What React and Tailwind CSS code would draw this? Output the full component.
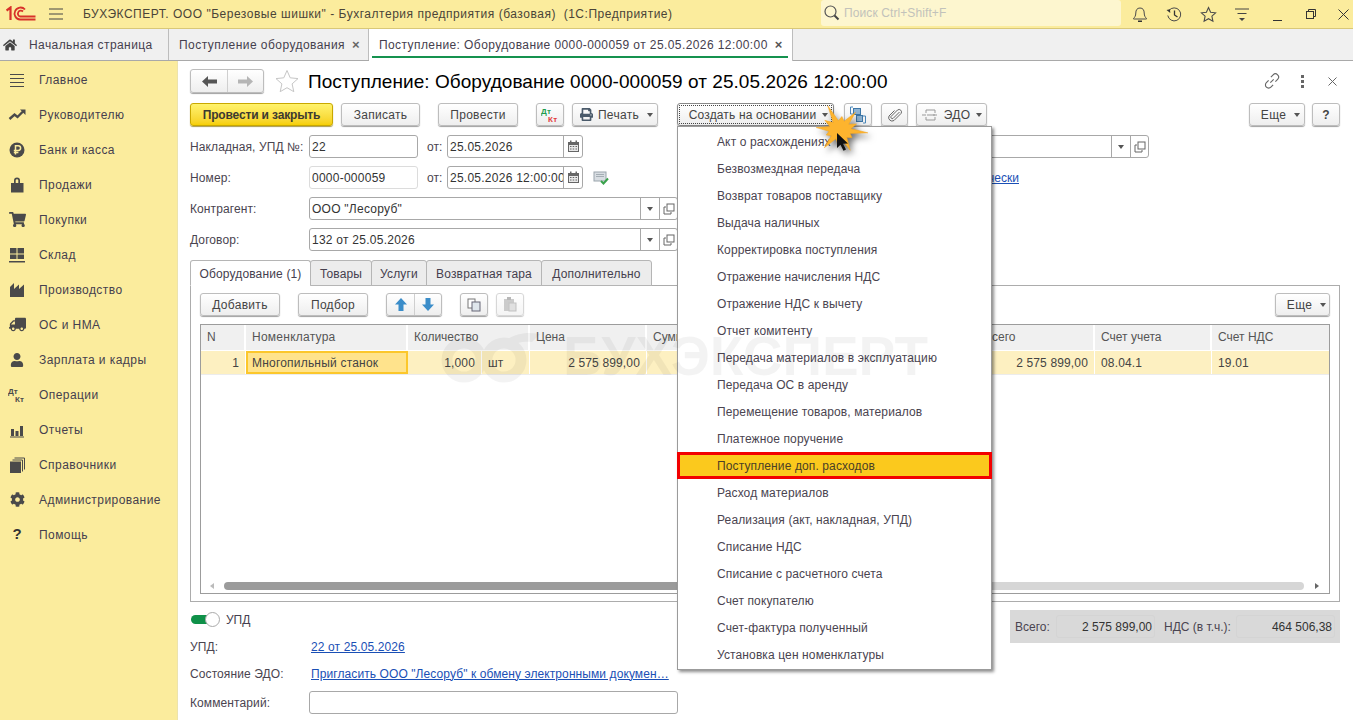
import React from "react";
import { FaHome, FaShoppingCart, FaTruck, FaUser, FaCog, FaPrint } from "react-icons/fa";

const I = ({ children, w = 20, h = 20, vb = "0 0 20 20", cls = "" }) => (
  <svg width={w} height={h} viewBox={vb} className={cls} fill="none">{children}</svg>
);
const D = "#4a4a4a";

const Caret = ({ c = "#555" }) => <span className="inline-block w-0 h-0 border-l-[3px] border-r-[3px] border-t-[4px] border-l-transparent border-r-transparent" style={{ borderTopColor: c }} />;

const Btn = ({ w, ml = "", children, cls = "", primary = false }) => (
  <div className={`${w} ${ml} h-[23px] shrink-0 flex items-center justify-center rounded-[3px] border text-[12px] ${primary ? "border-[#c9a800] bg-linear-to-b from-[#fff36b] to-[#f6cf00] font-bold tracking-[-0.15px] text-[#3c3a30] shadow-[0_1px_1px_#a89a50]" : "border-[#bdbdbd] bg-linear-to-b from-white to-[#eeeeee] tracking-[0.3px] text-[#444] shadow-[0_1px_1px_#a0a0a0]"} ${cls}`}>{children}</div>
);

const DtKt = ({ s = 1, a = "#1f9d4d", b = "#e33b3b" }) => (
  <svg width={18 * s} height={16 * s} viewBox="0 0 18 16">
    <text x="0" y="7" fontSize="8" fontWeight="700" fontFamily="Liberation Sans" fill={a}>Дт</text>
    <text x="7" y="15" fontSize="8" fontWeight="700" fontFamily="Liberation Sans" fill={b}>Кт</text>
  </svg>
);

const menuIcons = {
  main: <I><path d="M3 4.500h14M3 8.500h14M3 12.500h14M3 16.500h14" stroke={D} strokeWidth="1" /></I>,
  trend: <I><path d="M2.500 14l5-4.500 3 2.500 6-6" stroke={D} strokeWidth="2.400" /><path d="M13 4.500h5.500V10z" fill={D} /></I>,
  rub: <I><circle cx="10" cy="10" r="7.500" fill={D} /><path d="M8.500 14.500V5.700h2.700a2.300 2.300 0 010 4.800H6.800M6.800 12.600h4.600" stroke="#fbec9d" strokeWidth="1.500" /></I>,
  bag: <I><path d="M4 8h3V5.500a3 3 0 016 0V8h3.500v9.500H4z" fill={D} /><path d="M8.700 8V5.500a1.300 1.300 0 012.600 0V8z" fill="#fbec9d" /></I>,
  cart: <FaShoppingCart size={17} color={D} />,
  store: <I><path d="M3 3h6.500v5.500H3zM10.500 3H17v5.500h-6.500zM3 9.500h6.500V14H3zM10.500 9.500H17V14h-6.500z" fill={D} /><path d="M2 16h16v1.500H2z" fill={D} /></I>,
  prod: <I><path d="M3 17V7l4-4v6l5-4.500V9l5-4.500V17z" fill={D} /></I>,
  truck: <FaTruck size={17} color={D} style={{ transform: "scaleX(-1)" }} />,
  user: <FaUser size={14} color={D} />,
  dk: <DtKt a={D} b={D} />,
  bars: <I><path d="M4 9h3v7H4zM8.500 11h3v5h-3zM13 6h3v10h-3zM3 16.500h14v1H3z" fill={D} /></I>,
  books: <I><path d="M3 6.500h11V18H3z" fill={D} /><path d="M5.500 5h10v11.500M7.500 3h10v11.500" stroke={D} strokeWidth="1" /></I>,
  gear: <FaCog size={15} color={D} />,
  help: <span className="text-[15px] font-bold text-[#333]">?</span>,
};
const side = [["main", "Главное"], ["trend", "Руководителю"], ["rub", "Банк и касса"], ["bag", "Продажи"], ["cart", "Покупки"], ["store", "Склад"], ["prod", "Производство"], ["truck", "ОС и НМА"], ["user", "Зарплата и кадры"], ["dk", "Операции"], ["bars", "Отчеты"], ["books", "Справочники"], ["gear", "Администрирование"], ["help", "Помощь"]];

const Cal = () => (
  <svg width="13" height="13" viewBox="0 0 13 13"><path d="M1 2h11v10H1z" fill="#666" /><path d="M2 5h9v6H2z" fill="#e8e8e8" /><path d="M3 .5h1.500V3H3zM8.500.5H10V3H8.500z" fill="#666" /><path d="M3 6h1.500v1H3zM5.700 6h1.500v1H5.700zM8.500 6H10v1H8.500zM3 8.500h1.500v1H3zM5.700 8.500h1.500v1H5.700zM8.500 8.500H10v1H8.500z" fill="#666" /></svg>
);
const CopyI = () => (
  <svg width="12" height="12" viewBox="0 0 12 12" fill="none"><rect x="4" y="1" width="7" height="7" stroke="#666" /><path d="M3 4H1v7h7V9" stroke="#666" /></svg>
);
const Label = ({ w = "w-[119px]", children }) => <div className={`${w} shrink-0 text-[12px] tracking-[0.1px] text-[#4a4450]`}>{children}</div>;

const Field = ({ w, ml = "", children, light = false, cal = false, combo = false }) => (
  <div className={`${w} ${ml} h-[23px] shrink-0 flex items-center rounded-[3px] border bg-white text-[12px] tracking-[0.25px] text-[#333] ${light ? "border-[#dcdcdc]" : "border-[#a8a8a8]"}`}>
    <div className="flex-1 min-w-0 pl-[2px] overflow-hidden whitespace-nowrap">{children}</div>
    {cal && <div className="w-[19px] h-full flex items-center justify-center border-l border-[#a8a8a8]"><Cal /></div>}
    {combo && <div className="w-[19px] h-full flex items-center justify-center border-l border-[#a8a8a8]"><Caret /></div>}
    {combo && <div className="w-[18px] h-full flex items-center justify-center border-l border-[#a8a8a8]"><CopyI /></div>}
  </div>
);

const tabs = [["w-[121px]", "Оборудование (1)"], ["w-[62px]", "Товары"], ["w-[56px]", "Услуги"], ["w-[116px]", "Возвратная тара"], ["w-[111px]", "Дополнительно"]];
const menu = ["Акт о расхождениях", "Безвозмездная передача", "Возврат товаров поставщику", "Выдача наличных", "Корректировка поступления", "Отражение начисления НДС", "Отражение НДС к вычету", "Отчет комитенту", "Передача материалов в эксплуатацию", "Передача ОС в аренду", "Перемещение товаров, материалов", "Платежное поручение", "Поступление доп. расходов", "Расход материалов", "Реализация (акт, накладная, УПД)", "Списание НДС", "Списание с расчетного счета", "Счет покупателю", "Счет-фактура полученный", "Установка цен номенклатуры"];

const HCell = ({ w, children, cls = "" }) => <div className={`${w} shrink-0 h-full flex items-center pl-[6px] pb-[2px] border-r-2 border-white text-[12px] text-[#555] whitespace-nowrap overflow-hidden ${cls}`}>{children}</div>;
const RCell = ({ w, right, children, cls = "" }) => <div className={`${w} shrink-0 h-full flex items-center border-r border-white text-[12px] text-[#444] whitespace-nowrap ${right ? "justify-end" : ""} ${cls || "px-[6px]"}`}>{children}</div>;

const burst = (() => {
  const pts = [];
  const cx = 30, cy = 21;
  const outer = [28, 15, 26, 17, 26, 15, 24, 19, 31, 16, 26, 18];
  for (let i = 0; i < 24; i++) {
    const a = (i / 24) * Math.PI * 2 + 0.12;
    const r = i % 2 === 0 ? outer[i / 2] : 11;
    pts.push(`${(cx + Math.cos(a) * r).toFixed(1)},${(cy + Math.sin(a) * r * 0.85).toFixed(1)}`);
  }
  return pts.join(" ");
})();

export default function App() {
  return (
    <div className="relative w-[1353px] h-[720px] overflow-hidden bg-white font-['Liberation_Sans',Arial,sans-serif] text-[12px] flex flex-col">
      {/* top bar */}
      <div className="h-[29px] shrink-0 bg-[#fbec9d] border-b border-[#d9c878] flex items-center">
        <svg width="30" height="16" viewBox="0 0 30 16" fill="none" className="ml-[6px] shrink-0" stroke="#d8312a">
          <path d="M.500 4.500L4.500 1.500V14" strokeWidth="2.200" />
          <path d="M19 3.500A6 6 0 1014 13.500H29.500" strokeWidth="1.800" />
          <path d="M17 5.500A3 3 0 1014 10.500H29.500" strokeWidth="1.800" />
        </svg>
        <svg width="14" height="12" viewBox="0 0 14 12" className="ml-[13px] shrink-0"><path d="M0 1h14M0 6h14M0 11h14" stroke="#444" /></svg>
        <div className="ml-[20px] w-[738px] text-[12px] tracking-[0.52px] text-[#4a4438] whitespace-pre">БУХЭКСПЕРТ. ООО "Березовые шишки" - Бухгалтерия предприятия (базовая)  (1С:Предприятие)</div>
        <div className="w-[300px] h-[26px] -mt-[3px] rounded-[3px] bg-[#fdf6cf] flex items-center pl-[3px] gap-[4px] shrink-0">
          <svg width="16" height="16" viewBox="0 0 16 16" fill="none"><circle cx="6.500" cy="6.500" r="5.500" stroke="#555" strokeWidth="1.200" /><path d="M10.500 10.500l4 4" stroke="#444" strokeWidth="2" /></svg>
          <span className="text-[12px] tracking-[0.1px] text-[#c2c2bb]">Поиск Ctrl+Shift+F</span>
        </div>
        <div className="ml-[9px] flex items-center">
          <div className="w-[20px] flex justify-center"><svg width="16" height="17" viewBox="0 0 16 17" fill="none"><path d="M8 2c-3 0-4.200 2.200-4.200 5 0 3-1.300 4.500-2.300 5.500v.5h13v-.5c-1-1-2.300-2.500-2.300-5.500 0-2.800-1.200-5-4.200-5z" stroke="#4a4a4a" /><path d="M6 14.500h4v1.500H6z" fill="#333" /></svg></div>
          <div className="w-[20px] ml-[14px] flex justify-center"><svg width="17" height="17" viewBox="0 0 17 17" fill="none"><path d="M3 4.500a6.500 6.500 0 11-1.200 5" stroke="#4a4a4a" /><path d="M.5 4l3.500-.7.300 3.700z" fill="#333" /><path d="M8.500 4.500v4.500l3 2" stroke="#333" strokeWidth="1.300" /></svg></div>
          <div className="w-[20px] ml-[14px] flex justify-center"><svg width="17" height="17" viewBox="0 0 17 17" fill="none"><path d="M8.500 1.500l2.100 4.700 5 .6-3.700 3.400 1 5-4.400-2.500-4.400 2.500 1-5L1.400 6.800l5-.6z" stroke="#4a4a4a" strokeWidth="1.100" /></svg></div>
          <div className="w-[20px] ml-[14px] flex justify-center"><svg width="16" height="16" viewBox="0 0 16 16" fill="none"><path d="M1 3h14M3.500 7.500h9" stroke="#444" /><path d="M5 12h6l-3 3z" fill="#444" /></svg></div>
          <div className="w-[20px] ml-[15px] flex justify-center"><div className="w-[9px] h-px bg-[#333] mt-[12px]" /></div>
          <div className="w-[20px] ml-[14px] flex justify-center"><svg width="10" height="10" viewBox="0 0 10 10" fill="none"><path d="M2.500 2.500V.5h7v7h-2" stroke="#333" /><rect x=".5" y="2.500" width="7" height="7" stroke="#333" /></svg></div>
          <div className="w-[20px] ml-[12px] flex justify-center"><svg width="11" height="11" viewBox="0 0 11 11"><path d="M.5.500l10 10M10.500.500l-10 10" stroke="#333" /></svg></div>
        </div>
      </div>
      {/* tab bar */}
      <div className="h-[32px] shrink-0 bg-[#f0f0f0] border-b border-[#a9a9a9] flex text-[12px] text-[#45404e]">
        <div className="w-[169px] flex items-center border-r border-[#bdbdbd]">
          <FaHome size={14} color="#444" className="ml-[3px]" />
          <span className="ml-[12px] tracking-[0.42px]">Начальная страница</span>
        </div>
        <div className="w-[200px] flex items-center border-r border-[#bdbdbd]">
          <span className="ml-[10px] tracking-[0.45px]">Поступление оборудования</span>
          <span className="ml-[7px] text-[13px] font-bold text-[#666]">×</span>
        </div>
        <div className="w-[424px] h-[32px] bg-white border-r border-[#bdbdbd] relative flex items-center">
          <span className="ml-[10px] tracking-[0.41px]">Поступление: Оборудование 0000-000059 от 25.05.2026 12:00:00</span>
          <span className="ml-[7px] text-[13px] font-bold text-[#555]">×</span>
          <div className="absolute left-[3px] right-[4px] bottom-[3px] h-[2px] bg-[#15924f]" />
        </div>
      </div>

      <div className="flex-1 flex min-h-0">
        {/* sidebar */}
        <div className="w-[178px] shrink-0 bg-[#fbec9d] border-r border-[#ece3ad] pt-px flex flex-col text-[12px] text-[#45404e]">
          {side.map(([k, t]) => (
            <div key={t} className="h-[35px] shrink-0 flex items-center">
              <div className="w-[20px] ml-[7px] flex justify-center">{menuIcons[k]}</div>
              <span className="ml-[12px] tracking-[0.44px]">{t}</span>
            </div>
          ))}
        </div>

        {/* content */}
        <div className="flex-1 min-w-0 pl-[12px] pr-[13px] pt-[8px] flex flex-col">
          <div className="h-[24px] flex items-center shrink-0">
            <div className="w-[74px] h-[24px] flex rounded-[3px] border border-[#bdbdbd] bg-linear-to-b from-white to-[#eeeeee] shadow-[0_1px_1px_#a0a0a0]">
              <div className="w-[37px] flex items-center justify-center border-r border-[#cfcfcf]"><svg width="15" height="11" viewBox="0 0 15 11"><path d="M6 0v3.500h9v4H6V11L0 5.500z" fill="#555" /></svg></div>
              <div className="flex-1 flex items-center justify-center"><svg width="15" height="11" viewBox="0 0 15 11"><path d="M9 0v3.500H0v4h9V11l6-5.500z" fill="#b5b5b5" /></svg></div>
            </div>
            <svg width="24" height="24" viewBox="0 0 24 24" fill="none" className="ml-[11px]"><path d="M12 1.500l3.200 7.300 7.800.8-5.900 5.300 1.700 7.800L12 18.700l-6.800 4 1.700-7.800L1 9.600l7.800-.8z" stroke="#c6c6c6" /></svg>
            <div className="ml-[9px] text-[19px] tracking-[0.05px] leading-none text-black whitespace-nowrap">Поступление: Оборудование 0000-000059 от 25.05.2026 12:00:00</div>
            <div className="ml-auto flex items-center text-[#666]">
              <svg width="18" height="18" viewBox="0 0 16 16" fill="none"><path d="M6.500 9.500l3-3M7 4.500l2-2a2.800 2.800 0 014 4l-2 2M9 11.500l-2 2a2.800 2.800 0 01-4-4l2-2" stroke="#666" /></svg>
              <div className="ml-[20px] w-[3px] flex flex-col gap-[2px]"><div className="h-[3px] bg-[#666]" /><div className="h-[3px] bg-[#666]" /><div className="h-[3px] bg-[#666]" /></div>
              <svg width="9" height="9" viewBox="0 0 9 9" className="ml-[24px] mr-[3px]"><path d="M.5.500l8 8M8.500.500l-8 8" stroke="#666" /></svg>
            </div>
          </div>

          {/* toolbar */}
          <div className="mt-[10px] flex shrink-0">
            <Btn w="w-[143px]" primary>Провести и закрыть</Btn>
            <Btn w="w-[79px]" ml="ml-[8px]">Записать</Btn>
            <Btn w="w-[80px]" ml="ml-[18px]">Провести</Btn>
            <Btn w="w-[28px]" ml="ml-[18px]"><DtKt /></Btn>
            <Btn w="w-[86px]" ml="ml-[8px]" cls="gap-[5px] pl-[3px]"><FaPrint size={13} color="#4a5a6a" />Печать<span className="ml-[3px] flex"><Caret /></span></Btn>
            <Btn w="w-[157px]" ml="ml-[19px]" cls="gap-[6px] pl-[6px] !tracking-[0.15px] !border-[#888] outline-1 outline-dotted outline-[#444] -outline-offset-3 text-[#333]">Создать на основании<Caret /></Btn>
            <Btn w="w-[28px]" ml="ml-[10px]">
              <svg width="18" height="18" viewBox="0 0 18 18" fill="none"><path d="M4 1H1.500v7H4M14 10h2.500v7H14" stroke="#4a86b8" /><rect x="4.500" y="2.500" width="7" height="6" fill="#8fb4d3" stroke="#3d77a8" /><rect x="7.500" y="9.500" width="6" height="6" fill="#8fb4d3" stroke="#3d77a8" /></svg>
            </Btn>
            <Btn w="w-[27px]" ml="ml-[9px]">
              <svg width="14" height="14" viewBox="0 0 14 14" fill="none"><path d="M11.500 4L5 10.500a1.500 1.500 0 01-2-2l6.500-6.500a2.500 2.500 0 013.500 3.500L6 12.500A3.500 3.500 0 011 8l5.500-5.500" stroke="#666" /></svg>
            </Btn>
            <Btn w="w-[71px]" ml="ml-[8px]" cls="gap-[6px]"><svg width="17" height="14" viewBox="0 0 17 14" fill="none"><path d="M5 2h9M6 7h8M5 12h9M5 2v3M5 9v3M14 2v3M14 9v3" stroke="#999" /><path d="M1 7h4M12 7h4" stroke="#999" /></svg>ЭДО<Caret /></Btn>
            <Btn w="w-[56px]" ml="ml-[262px]" cls="gap-[8px] pl-[7px]">Еще<Caret /></Btn>
            <Btn w="w-[28px]" ml="ml-[7px]" cls="font-bold text-[#333]">?</Btn>
          </div>

          {/* form rows */}
          <div className="mt-[9px] flex items-center h-[23px] shrink-0">
            <Label>Накладная, УПД №:</Label>
            <Field w="w-[109px]">22</Field>
            <span className="ml-[9px] w-[20px] text-[#4a4450]">от:</span>
            <Field w="w-[136px]" cal>25.05.2026</Field>
            <Field w="w-[349px]" ml="ml-[217px]" combo> </Field>
          </div>
          <div className="mt-[8px] flex items-center h-[23px] shrink-0">
            <Label>Номер:</Label>
            <Field w="w-[109px]" light>0000-000059</Field>
            <span className="ml-[9px] w-[20px] text-[#4a4450]">от:</span>
            <Field w="w-[136px]" cal>25.05.2026 12:00:00</Field>
            <svg width="16" height="14" viewBox="0 0 16 14" className="ml-[10px] shrink-0"><rect x="1" y="1" width="12" height="9" fill="#d8dde2" stroke="#9aa4ac" /><path d="M3 3.500h8M3 5.500h8" stroke="#a4adb4" /><path d="M8 10l2.500 2.500L15 7.500" stroke="#3aa24c" strokeWidth="2" fill="none" /></svg>
            <div className="w-[410px] text-right text-[#1a4fb5] underline whitespace-nowrap shrink-0">автоматически</div>
          </div>
          <div className="mt-[8px] flex items-center h-[23px] shrink-0">
            <Label>Контрагент:</Label>
            <Field w="w-[369px]" combo>ООО "Лесоруб"</Field>
          </div>
          <div className="mt-[8px] flex items-center h-[23px] shrink-0">
            <Label>Договор:</Label>
            <Field w="w-[369px]" combo>132 от 25.05.2026</Field>
          </div>

          {/* tabs */}
          <div className="mt-[9px] flex h-[26px] shrink-0 text-[12px] tracking-[0.15px] text-[#45404e] relative z-10">
            {tabs.map(([w, t], i) => (
              <div key={t} className={`${w} shrink-0 flex items-center justify-center pt-px rounded-t-[3px] border border-[#b5b5b5] ${i === 0 ? "bg-white border-b-white" : "bg-[#ececec] -ml-px"}`}>{t}</div>
            ))}
          </div>
          <div className="-mt-px h-[317px] shrink-0 border border-[#acacac] px-[9px] pt-[7px] flex flex-col">
            <div className="flex shrink-0">
              <Btn w="w-[80px]">Добавить</Btn>
              <Btn w="w-[70px]" ml="ml-[18px]">Подбор</Btn>
              <div className="ml-[18px] w-[56px] h-[23px] flex rounded-[3px] border border-[#bdbdbd] bg-linear-to-b from-white to-[#eeeeee] shadow-[0_1px_1px_#a0a0a0]">
                <div className="w-[28px] flex items-center justify-center border-r border-[#cfcfcf]"><svg width="12" height="13" viewBox="0 0 12 13"><path d="M6 0l6 6.500H8.500V13h-5V6.500H0z" fill="#3b8dc9" /></svg></div>
                <div className="flex-1 flex items-center justify-center"><svg width="12" height="13" viewBox="0 0 12 13"><path d="M6 13L0 6.500h3.500V0h5v6.500H12z" fill="#3b8dc9" /></svg></div>
              </div>
              <Btn w="w-[28px]" ml="ml-[18px]"><svg width="14" height="14" viewBox="0 0 14 14" fill="none"><rect x="1" y="1" width="7" height="9" fill="#fff" stroke="#777" /><rect x="5" y="4" width="8" height="9" fill="#dfe6ec" stroke="#667" /></svg></Btn>
              <Btn w="w-[28px]" ml="ml-[8px]" cls="opacity-60"><svg width="14" height="15" viewBox="0 0 14 15"><rect x="1" y="2" width="10" height="12" fill="#aaa" /><rect x="4" y="0" width="4" height="3" fill="#888" /><rect x="6" y="6" width="7" height="8" fill="#ccc" stroke="#999" /></svg></Btn>
              <Btn w="w-[55px]" ml="ml-auto" cls="gap-[8px] pl-[8px]">Еще<Caret /></Btn>
            </div>
            {/* table */}
            <div className="mt-[8px] h-[270px] shrink-0 border border-[#9c9c9c] flex flex-col">
              <div className="h-[25px] shrink-0 flex bg-[#f0f0f0]">
                <HCell w="w-[45px]">N</HCell>
                <HCell w="w-[162px]" cls="tracking-[0.25px]">Номенклатура</HCell>
                <HCell w="w-[122px]">Количество</HCell>
                <HCell w="w-[117px]">Цена</HCell>
                <HCell w="w-[331px]">Сумма</HCell>
                <HCell w="w-[117px]">Всего</HCell>
                <HCell w="w-[117px]">Счет учета</HCell>
                <div className="flex-1 flex items-center pl-[6px] pb-[2px] text-[#555]">Счет НДС</div>
              </div>
              <div className="h-[24px] mt-px shrink-0 flex bg-[#fdf0c1] border-b border-[#ececec] tracking-[0.15px]">
                <RCell w="w-[45px]" right>1</RCell>
                <RCell w="w-[162px]" cls="pl-[4px] bg-[#ffe38c] !border-2 !border-[#fcc72b] tracking-[0.2px]">Многопильный станок</RCell>
                <RCell w="w-[74px]" right>1,000</RCell>
                <RCell w="w-[48px]">шт</RCell>
                <RCell w="w-[117px]" right>2 575 899,00</RCell>
                <RCell w="w-[331px]"> </RCell>
                <RCell w="w-[117px]" right>2 575 899,00</RCell>
                <RCell w="w-[117px]">08.04.1</RCell>
                <div className="flex-1 flex items-center pl-[6px] text-[#444]">19.01</div>
              </div>
              <div className="flex-1" />
              <div className="h-[8px] mb-[3px] shrink-0 flex items-center pl-[9px] pr-[10px]">
                <span className="w-0 h-0 border-y-[3px] border-r-[4px] border-y-transparent border-r-[#bbb]" />
                <div className="ml-[10px] flex-1 h-[8px] flex rounded-[4px] overflow-hidden">
                  <div className="w-[453px] bg-[#9b9b9b]" />
                  <div className="flex-1 bg-[#d6d6d6]" />
                </div>
                <span className="ml-[11px] w-0 h-0 border-y-[3px] border-l-[4px] border-y-transparent border-l-[#666]" />
              </div>
            </div>
          </div>

          {/* bottom */}
          <div className="flex justify-between mt-[8px] shrink-0">
            <div className="flex flex-col">
              <div className="mt-[2px] h-[15px] flex items-center">
                <div className="relative w-[29px] h-[15px] ml-px">
                  <div className="absolute left-0 top-[3px] w-[20px] h-[9px] rounded-l-[5px] bg-[#0f9149]" />
                  <div className="absolute right-0 top-0 w-[15px] h-[15px] rounded-full bg-white border border-[#aaa]" />
                </div>
                <span className="ml-[6px] text-[#45404e]">УПД</span>
              </div>
              <div className="mt-[8px] h-[23px] flex items-center">
                <Label>УПД:</Label>
                <span className="ml-[2px] tracking-[0.12px] text-[#1a4fb5] underline">22 от 25.05.2026</span>
              </div>
              <div className="mt-[4px] h-[23px] flex items-center">
                <Label>Состояние ЭДО:</Label>
                <span className="ml-[2px] tracking-[0.09px] text-[#1a4fb5] underline whitespace-nowrap">Пригласить ООО "Лесоруб" к обмену электронными докумен…</span>
              </div>
              <div className="mt-[6px] h-[23px] flex items-center">
                <Label>Комментарий:</Label>
                <Field w="w-[369px]"> </Field>
              </div>
            </div>
            <div className="w-[330px] h-[33px] bg-[#d9d9d9] flex items-center pl-[5px] text-[12px] text-[#4a4450]">
              <span className="w-[41px] shrink-0">Всего:</span>
              <div className="w-[99px] h-[23px] shrink-0 border border-[#d4d4d4] rounded-[3px] flex items-center justify-end pr-[2px] text-[#333]">2 575 899,00</div>
              <span className="ml-[9px] w-[72px] shrink-0 whitespace-nowrap">НДС (в т.ч.):</span>
              <div className="w-[99px] h-[23px] shrink-0 border border-[#d4d4d4] rounded-[3px] flex items-center justify-end pr-[2px] text-[#333]">464 506,38</div>
            </div>
          </div>
        </div>
      </div>

      {/* dropdown */}
      <div className="absolute left-[677px] top-[126px] w-[315px] border border-[#9b9b9b] bg-white py-px shadow-[2px_2px_3px_rgba(0,0,0,0.45)] flex flex-col text-[12px] tracking-[0.12px] text-[#4a4450]">
        {menu.map((m) => (
          <div key={m} className={`h-[27px] shrink-0 flex items-center whitespace-nowrap ${m === "Поступление доп. расходов" ? "bg-[#fbc91d] border-[3px] border-[#f20000] -mx-px pl-[37px] text-[#4b4026]" : "pl-[39px]"}`}>{m}</div>
        ))}
      </div>

      {/* watermark */}
      <div className="absolute left-[440px] top-[328px] flex items-center pointer-events-none opacity-[0.045]">
        <svg width="118" height="56" viewBox="0 0 118 56" fill="none"><circle cx="24" cy="32" r="17" stroke="#000" strokeWidth="11" /><circle cx="64" cy="32" r="17" stroke="#000" strokeWidth="11" /><path d="M66 12c12-8 24-8 34-6l-8 8c-8-1-14 0-20 4z" fill="#000" /></svg>
        <span className="ml-[5px] text-[55px] leading-none font-bold text-black whitespace-nowrap">БУХЭКСПЕРТ</span>
      </div>

      {/* click marker */}
      <svg width="66" height="50" viewBox="0 0 66 50" className="absolute left-[810px] top-[109px] overflow-visible drop-shadow-[3px_4px_3px_rgba(0,0,0,0.55)]">
        <polygon points={burst} fill="#fdb42e" stroke="#f3a31d" strokeWidth="0.5" />
        <path d="M27 24v15l3.500-3.300 3 6 2.500-1.200-3-5.700 5-.4z" fill="#111" />
      </svg>
    </div>
  );
}
